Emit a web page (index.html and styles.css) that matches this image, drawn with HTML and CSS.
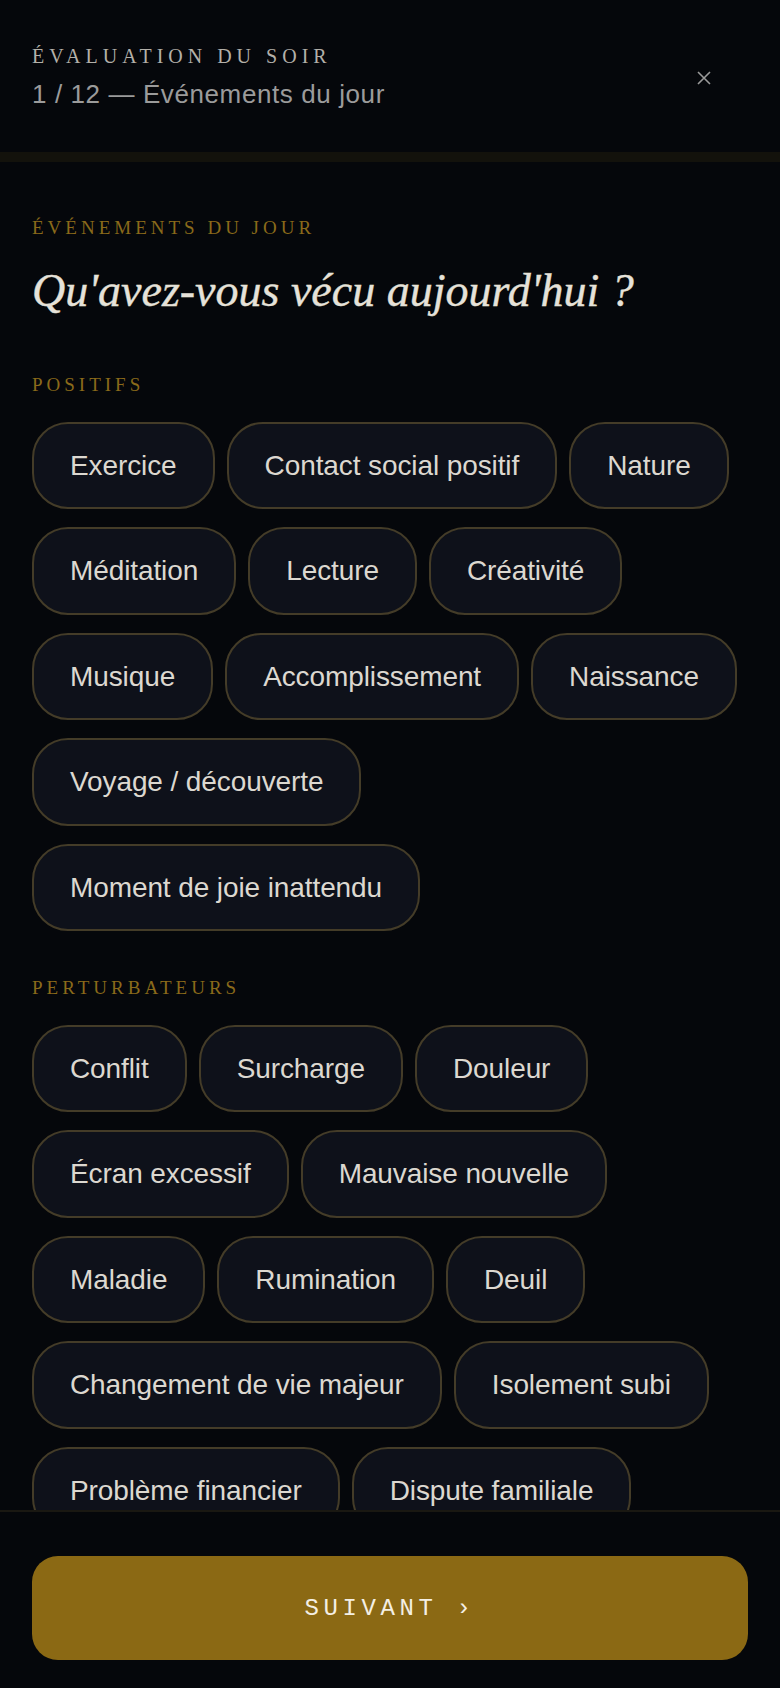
FILE: index.html
```html
<!DOCTYPE html>
<html lang="fr">
<head>
    <meta charset="UTF-8">
    <meta name="viewport" content="width=device-width, initial-scale=1.0">
    <title>Évaluation du soir</title>
    <link rel="stylesheet" href="styles.css">
</head>
<body>
    <header class="top-bar">
        <div class="top-text">
            <div class="kicker">Évaluation du soir</div>
            <div class="step">1 / 12 — Événements du jour</div>
        </div>
        <button class="close-btn" aria-label="Fermer">
            <svg width="14" height="14" viewBox="0 0 14 14">
                <path d="M1 1 L13 13 M13 1 L1 13" stroke="#9a9a9a" stroke-width="1.6" fill="none"/>
            </svg>
        </button>
    </header>
    <div class="progress-track"></div>

    <main class="content">
        <div class="section-label">Événements du jour</div>
        <h1 class="question">Qu'avez-vous vécu aujourd'hui ?</h1>

        <section class="group">
            <div class="section-label">Positifs</div>
            <div class="chips">
                <button class="chip">Exercice</button>
                <button class="chip">Contact social positif</button>
                <button class="chip">Nature</button>
                <button class="chip">Méditation</button>
                <button class="chip">Lecture</button>
                <button class="chip">Créativité</button>
                <button class="chip">Musique</button>
                <button class="chip">Accomplissement</button>
                <button class="chip">Naissance</button>
                <button class="chip">Voyage / découverte</button>
                <button class="chip">Moment de joie inattendu</button>
            </div>
        </section>

        <section class="group">
            <div class="section-label">Perturbateurs</div>
            <div class="chips">
                <button class="chip">Conflit</button>
                <button class="chip">Surcharge</button>
                <button class="chip">Douleur</button>
                <button class="chip">Écran excessif</button>
                <button class="chip">Mauvaise nouvelle</button>
                <button class="chip">Maladie</button>
                <button class="chip">Rumination</button>
                <button class="chip">Deuil</button>
                <button class="chip">Changement de vie majeur</button>
                <button class="chip">Isolement subi</button>
                <button class="chip">Problème financier</button>
                <button class="chip">Dispute familiale</button>
            </div>
        </section>
    </main>

    <footer class="bottom-bar">
        <button class="next-btn">SUIVANT ›</button>
    </footer>
</body>
</html>
```

FILE: styles.css
```css
html, body {
    height: 100%;
}
body {
    margin: 0;
    background-color: #05070b;
    color: #dcd8d0;
    font-family: "Liberation Sans", Arial, sans-serif;
    display: flex;
    flex-direction: column;
    overflow: hidden;
}
.top-bar {
    display: flex;
    justify-content: space-between;
    align-items: center;
    padding: 44px 52px 41px 32px;
}
.kicker {
    font-family: "Liberation Serif", serif;
    font-size: 20px;
    line-height: 24px;
    letter-spacing: 5px;
    text-transform: uppercase;
    color: #b3b0a9;
}
.step {
    margin-top: 9px;
    font-size: 26px;
    line-height: 34px;
    letter-spacing: 0.6px;
    color: #9b9b9b;
}
.close-btn {
    width: 48px;
    height: 48px;
    display: flex;
    align-items: center;
    justify-content: center;
    background: none;
    border: none;
    padding: 0;
    cursor: pointer;
}
.progress-track {
    height: 10px;
    background-color: #13120c;
    flex-shrink: 0;
}
.content {
    flex: 1;
    overflow: hidden;
    padding: 54px 32px 0;
}
.section-label {
    font-family: "Liberation Serif", serif;
    font-size: 19px;
    line-height: 24px;
    letter-spacing: 4px;
    text-transform: uppercase;
    color: #8a6a1a;
}
.question {
    margin: 23px 0 0;
    font-family: "Liberation Serif", serif;
    font-style: italic;
    font-weight: normal;
    font-size: 46px;
    line-height: 55px;
    color: #e6e2d9;
    -webkit-text-stroke: 0.4px #e6e2d9;
}
.group {
    margin-top: 45px;
}
.question + .group {
    margin-top: 55px;
}
.chips {
    display: flex;
    flex-wrap: wrap;
    gap: 18px 12px;
    margin-top: 25px;
}
.question + .group .chips {
    margin-top: 25px;
}
.chip {
    font-family: "Liberation Sans", Arial, sans-serif;
    font-size: 28px;
    line-height: 39.4px;
    letter-spacing: -0.1px;
    padding: 22px 36px;
    color: #dcd8d0;
    background-color: #0e111a;
    border: 2px solid #443c28;
    border-radius: 36px;
    cursor: pointer;
}
.bottom-bar {
    flex-shrink: 0;
    border-top: 2px solid #1a1812;
    padding: 44px 32px 28px;
    background-color: #05070b;
}
.next-btn {
    width: 100%;
    height: 104px;
    background-color: #8b6914;
    color: #f4efe4;
    border: none;
    border-radius: 26px;
    font-family: "Liberation Mono", "Courier New", monospace;
    font-size: 24px;
    letter-spacing: 4.6px;
    cursor: pointer;
}
```
